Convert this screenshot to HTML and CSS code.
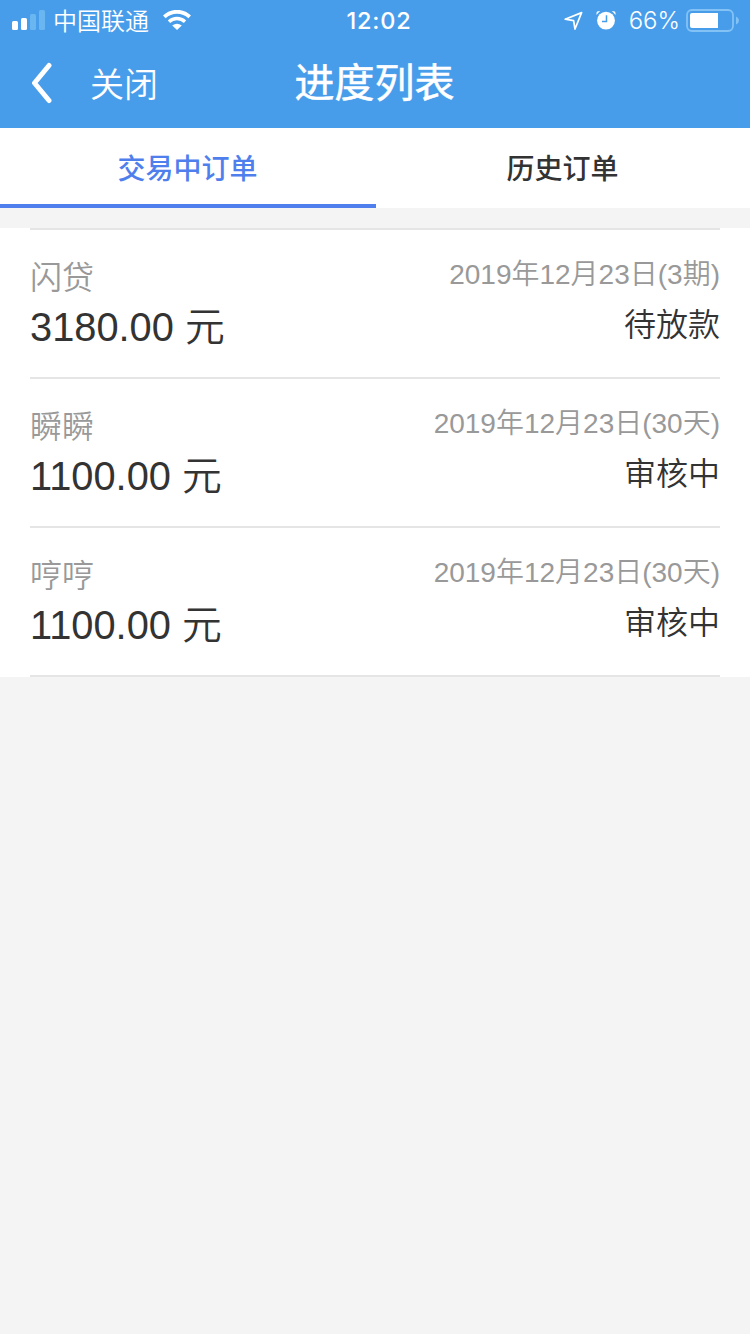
FILE: index.html
```html
<!DOCTYPE html>
<html lang="zh-CN">
<head>
    <meta charset="UTF-8">
    <meta name="viewport" content="width=device-width, initial-scale=1.0">
    <title>进度列表</title>
    <link rel="stylesheet" href="styles.css">
</head>
<body>
    <header>
        <div class="status-bar">
            <div class="status-left">
                <svg class="signal" width="34" height="20" viewBox="0 0 34 20" fill="#fff">
                    <rect x="0" y="11" width="6" height="9" rx="1.5"/>
                    <rect x="9" y="8" width="6" height="12" rx="1.5"/>
                    <rect x="18" y="4" width="6" height="16" rx="1.5" fill="#69b6f1"/>
                    <rect x="27" y="0" width="6" height="20" rx="1.5" fill="#69b6f1"/>
                </svg>
                <span class="carrier">中国联通</span>
                <svg class="wifi" width="28" height="20" viewBox="0 0 28 20">
                    <path d="M1.3 6.9A18.2 18.2 0 0 1 26.7 6.9" fill="none" stroke="#fff" stroke-width="3.8"/>
                    <path d="M6 11.7A11.5 11.5 0 0 1 22 11.7" fill="none" stroke="#fff" stroke-width="3.4"/>
                    <path d="M14 20L9.2 15.5Q14 11.8 18.8 15.5Z" fill="#fff"/>
                </svg>
            </div>
            <div class="time">12:02</div>
            <div class="status-right">
                <svg class="location" width="20" height="20" viewBox="0 0 20 20">
                    <path d="M1.2 9.2L17.6 2.6L11 19L9.6 10.6Z" fill="none" stroke="#fff" stroke-width="1.7" stroke-linejoin="round"/>
                </svg>
                <svg class="alarm" width="20" height="20" viewBox="0 0 20 20">
                    <circle cx="10" cy="10.6" r="8.9" fill="#fff"/>
                    <path d="M.5 4.9V2.9Q.5 1.3 2.1 1.3H4.3Q2.3 2.7 .5 4.9ZM19.5 4.9V2.9Q19.5 1.3 17.9 1.3H15.7Q17.7 2.7 19.5 4.9Z" fill="#fff"/>
                    <path d="M10.5 5.2V11.5H6" fill="none" stroke="#489deb" stroke-width="1.5"/>
                </svg>
                <span class="percent">66%</span>
                <svg class="battery" width="54" height="24" viewBox="0 0 54 24">
                    <rect x="1" y="2" width="46" height="21" rx="5" fill="none" stroke="#83c2f5" stroke-width="1.8"/>
                    <path d="M50 8.5Q53 9.8 53 12.5T50 16.5Z" fill="#83c2f5"/>
                    <path d="M6 5H32V20H6Q4 20 4 18V7Q4 5 6 5Z" fill="#fff"/>
                </svg>
            </div>
        </div>
        <div class="nav-bar">
            <div class="nav-back">
                <svg width="22" height="42" viewBox="0 0 22 42">
                    <path d="M19 3.5L4.5 21L19 38.5" fill="none" stroke="#fff" stroke-width="5" stroke-linecap="round" stroke-linejoin="round"/>
                </svg>
                <span class="close">关闭</span>
            </div>
            <h1>进度列表</h1>
        </div>
    </header>

    <div class="tabs">
        <div class="tab active">交易中订单</div>
        <div class="tab">历史订单</div>
    </div>

    <div class="list">
        <div class="item">
            <div class="item-left">
                <div class="name">闪贷</div>
                <div class="amount">3180.00 元</div>
            </div>
            <div class="item-right">
                <div class="date">2019年12月23日(3期)</div>
                <div class="state">待放款</div>
            </div>
        </div>
        <div class="item">
            <div class="item-left">
                <div class="name">瞬瞬</div>
                <div class="amount">1100.00 元</div>
            </div>
            <div class="item-right">
                <div class="date">2019年12月23日(30天)</div>
                <div class="state">审核中</div>
            </div>
        </div>
        <div class="item">
            <div class="item-left">
                <div class="name">哼哼</div>
                <div class="amount">1100.00 元</div>
            </div>
            <div class="item-right">
                <div class="date">2019年12月23日(30天)</div>
                <div class="state">审核中</div>
            </div>
        </div>
    </div>
</body>
</html>
```
FILE: styles.css
```css
* {
    box-sizing: border-box;
}

body {
    font-family: "Liberation Sans", "Noto Sans CJK SC", sans-serif;
    font-weight: 350;
    margin: 0;
    min-height: 100vh;
    background-color: #f4f4f4;
    color: #333;
}

svg {
    display: block;
    flex-shrink: 0;
}

header {
    height: 128px;
    background-color: #489deb;
    color: white;
}

.status-bar, .nav-bar {
    display: grid;
    grid-template-columns: 1fr auto 1fr;
    align-items: center;
}

.status-bar {
    height: 40px;
    padding: 0 10px 0 12px;
}

.status-left, .status-right {
    display: flex;
    align-items: center;
}

.status-right {
    justify-content: flex-end;
}

.carrier {
    margin-left: 7px;
    font-family: "Noto Sans CJK SC", sans-serif;
    font-size: 24px;
    line-height: 40px;
}

.wifi {
    margin-left: 14px;
}

.time {
    padding: 2px 0 0 6px;
    font-family: Inter, sans-serif;
    font-size: 23.5px;
    font-weight: 550;
    letter-spacing: 0.8px;
    line-height: 38px;
}

.alarm {
    margin-left: 12px;
}

.percent {
    margin: 0 6px 0 13px;
    padding-top: 2px;
    font-family: Inter, sans-serif;
    font-size: 24px;
    font-weight: 300;
    line-height: 38px;
}

.nav-bar {
    height: 86px;
    padding: 0 31px 0 30px;
}

.nav-back {
    display: flex;
    align-items: center;
}

.close {
    margin-left: 38px;
    font-family: "Noto Sans CJK SC", sans-serif;
    font-size: 34px;
    line-height: 48px;
}

h1 {
    margin: 0 0 6px;
    font-family: "Noto Sans CJK SC", sans-serif;
    font-size: 40px;
    font-weight: 400;
    line-height: 60px;
    -webkit-text-stroke: 0.5px white;
}

.tabs {
    display: flex;
    height: 80px;
    background-color: white;
}

.tab {
    width: 374px;
    padding-right: 1px;
    font-family: "Noto Sans CJK SC", sans-serif;
    font-size: 28px;
    font-weight: 500;
    line-height: 79px;
    text-align: center;
}

.tab.active {
    width: 376px;
    color: #4f7fed;
    border-bottom: 4px solid #4f7fed;
}

.list {
    margin-top: 20px;
    padding: 0 30px;
    background-color: white;
}

.item {
    display: flex;
    justify-content: space-between;
    height: 149px;
    padding-top: 22px;
    border-top: 2px solid #e5e5e5;
}

.item:last-child {
    height: 151px;
    border-bottom: 2px solid #e5e5e5;
}

.item-right {
    text-align: right;
}

.name, .date {
    color: #999;
}

.name {
    font-family: "Noto Sans CJK SC", sans-serif;
    font-size: 32px;
    line-height: 46px;
}

.amount {
    font-size: 39.8px;
    line-height: 58px;
}

.date {
    font-size: 28px;
    line-height: 46px;
}

.state {
    font-family: "Noto Sans CJK SC", sans-serif;
    font-size: 32px;
    line-height: 49px;
}
```
